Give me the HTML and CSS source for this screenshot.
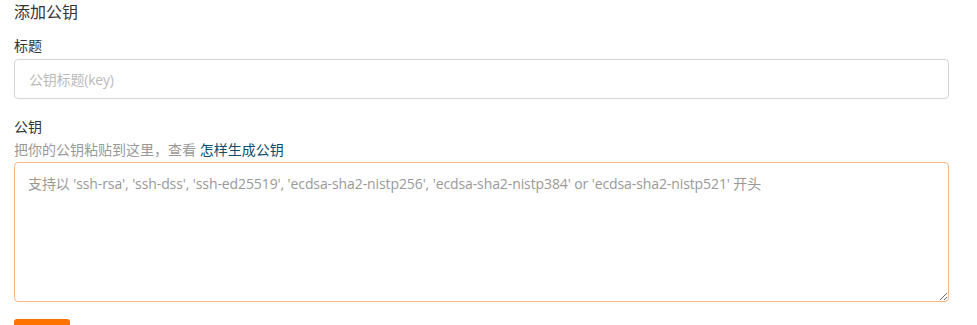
FILE: index.html
```html
<!DOCTYPE html>
<html lang="zh-CN">
<head>
<meta charset="utf-8">
<title>添加公钥</title>
<link rel="stylesheet" href="styles.css">
</head>
<body>
<div class="page">
  <h3 class="title">添加公钥</h3>
  <div class="field">
    <label class="label" for="key-title">标题</label>
    <input class="input" id="key-title" type="text" placeholder="公钥标题(key)">
  </div>
  <div class="field field-key">
    <label class="label" for="key-body">公钥</label>
    <div class="help">把你的公钥粘贴到这里，查看 <a class="link" href="#">怎样生成公钥</a></div>
    <textarea class="textarea" id="key-body" autofocus placeholder="支持以 'ssh-rsa', 'ssh-dss', 'ssh-ed25519', 'ecdsa-sha2-nistp256', 'ecdsa-sha2-nistp384' or 'ecdsa-sha2-nistp521' 开头"></textarea>
  </div>
  <button class="btn" type="button">确定</button>
</div>
</body>
</html>
```
FILE: styles.css
```css
html, body {
  margin: 0;
  padding: 0;
  background: #fff;
}
body {
  font-family: "Open Sans", "Noto Sans CJK SC", sans-serif;
  color: #333;
  font-size: 14px;
}
.page {
  padding: 0 28px 0 14px;
  display: flex;
  flex-direction: column;
}
.title {
  margin: 0;
  font-size: 16px;
  font-weight: 400;
  line-height: 24px;
  color: #333;
}
.field {
  display: flex;
  flex-direction: column;
  margin-top: 11px;
}
.field-key {
  margin-top: 17px;
}
.label {
  font-size: 14px;
  line-height: 22px;
  color: #333;
  margin-bottom: 2px;
}
.help {
  font-size: 14px;
  line-height: 22px;
  color: #999;
  margin-top: -1px;
  margin-bottom: 1px;
}
.link {
  color: #0b4f6c;
  text-decoration: none;
}
.input {
  box-sizing: border-box;
  height: 40px;
  width: 100%;
  border: 1px solid #d4d4d9;
  border-radius: 4px;
  padding: 0 14px;
  font-family: inherit;
  font-size: 14px;
  letter-spacing: -0.2px;
  color: #333;
  outline: none;
}
.input::placeholder {
  color: #bbb;
}
.textarea {
  box-sizing: border-box;
  height: 140px;
  width: 100%;
  border: 1px solid #fdb57c;
  border-radius: 4px;
  padding: 10px 13px;
  font-family: inherit;
  font-size: 14px;
  letter-spacing: -0.1px;
  line-height: 22px;
  color: #333;
  caret-color: #333;
  outline: none;
  resize: vertical;
}
.textarea::placeholder {
  color: #999;
}
.btn {
  align-self: flex-start;
  margin-top: 17px;
  width: 56px;
  height: 32px;
  border: 0;
  border-radius: 3px;
  background: #fe7300;
  color: #fff;
  font-family: inherit;
  font-size: 14px;
}
```
